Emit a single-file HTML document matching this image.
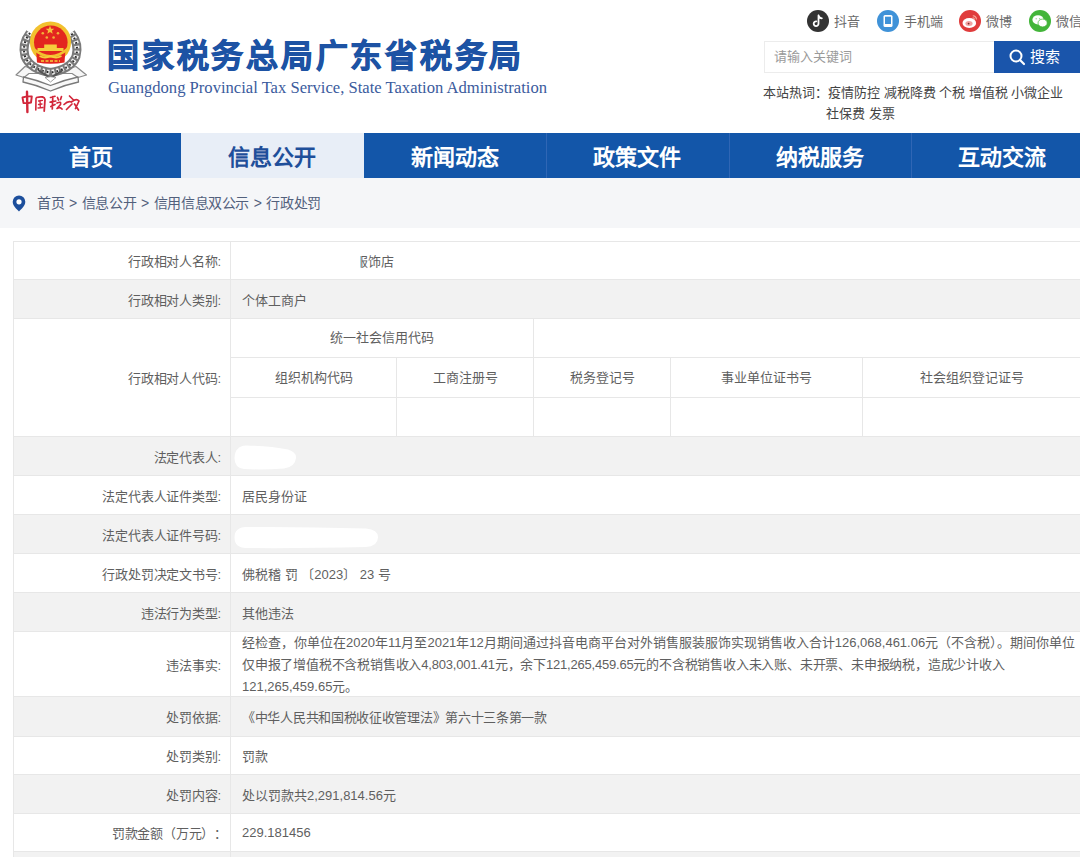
<!DOCTYPE html>
<html lang="zh-CN">
<head>
<meta charset="utf-8">
<style>
*{margin:0;padding:0;box-sizing:border-box}
html,body{width:1080px;height:857px;overflow:hidden;background:#fff}
body{font-family:"Liberation Sans",sans-serif;color:#333;position:relative}
.abs{position:absolute}
#header{position:absolute;left:0;top:0;width:1080px;height:133px;background:#fff}
#title{position:absolute;left:107px;top:32px;font-size:32px;font-weight:700;color:#1d53a4;letter-spacing:2.75px;white-space:nowrap;line-height:48px;-webkit-text-stroke:0.9px #1d53a4}
#sub{position:absolute;left:108px;top:78px;font-family:"Liberation Serif",serif;font-size:16.6px;color:#3b5b9d;white-space:nowrap;line-height:20px}
.soc{position:absolute;top:10px;height:22px;font-size:13px;color:#6a6a6a;line-height:22px;white-space:nowrap}
.soc svg{position:absolute;left:0;top:0}
.soc span{position:absolute;left:27px;top:1px}
#search{position:absolute;left:764px;top:41px;width:231px;height:32px;border:1px solid #ececec;border-right:none;background:#fff}
#search span{position:absolute;left:9px;top:0;line-height:30px;font-size:13px;color:#9a9a9a}
#sbtn{position:absolute;left:994px;top:41px;width:120px;height:32px;background:#1a55ab;color:#fff;font-size:15px;line-height:32px}
#sbtn svg{position:absolute;left:15px;top:8px}
#sbtn span{position:absolute;left:36px;top:0}
#hot{position:absolute;left:763px;top:83px;width:340px;font-size:13px;line-height:20.5px;color:#444;white-space:nowrap}
#hot .l{float:left}
#hot .w{margin-left:63px}
#nav{position:absolute;left:0;top:133px;width:1100px;height:45px;background:#1356a9}
#nav div{position:absolute;top:0;height:45px;width:182.67px;text-align:center;line-height:45px;padding-top:1.5px;font-size:22px;font-weight:700;color:#fff}
#nav div.on{background:#e8eef7;color:#1f4f9a}
#nav b{position:absolute;top:0;width:1px;height:45px;background:#2f66b5}
#crumb{position:absolute;left:0;top:178px;width:1080px;height:50px;background:#f5f6f8}
#crumb span{position:absolute;left:37px;top:14px;line-height:22px;font-size:14px;color:#52607c;white-space:nowrap;letter-spacing:-0.4px;word-spacing:1.4px}
#crumb svg{position:absolute;left:12px;top:17px}
#tbl{position:absolute;left:0;top:0;width:1080px;height:857px}
.row{position:absolute;left:13px;width:1100px;border-top:1px solid #e7e7e7}
.row.g{background:#f2f2f2}
.lab{position:absolute;left:0;top:0;width:218px;height:100%;text-align:right;padding-right:9px;font-size:13px;letter-spacing:-0.2px;color:#5f5f5f;border-left:1px solid #e7e7e7;border-right:1px solid #e7e7e7;display:flex;align-items:center;justify-content:flex-end;white-space:nowrap}
.val{position:absolute;left:229px;top:0;height:100%;font-size:13px;color:#5f5f5f;white-space:nowrap;display:flex;align-items:center}
.vl{position:absolute;left:217px;top:0;width:1px;height:100%;background:#e7e7e7}
.cell{position:absolute;font-size:13px;color:#5f5f5f;text-align:center;white-space:nowrap}
.blob{position:absolute;background:#fff;border-radius:50%}
</style>
</head>
<body>
<div id="header">
  <svg class="abs" style="left:0;top:0" width="100" height="125" viewBox="0 0 100 125">
    <!-- back ribbon -->
    <path d="M16 75 L25 66.5 L33 68.5 L68 68.5 L76 66.5 L86.5 75 L78 77.5 L72 73.5 L29 73.5 L24 77.5 Z" fill="#f6f6f6" stroke="#8a8a8a" stroke-width="1.2" stroke-linejoin="round"/>
    <!-- wreath -->
    <path d="M30 33 Q21.5 44 25 56.5 Q30.5 69.5 50.5 72.5 Q70.5 69.5 76 56.5 Q79.5 44 71 33" stroke="#7a7a7a" stroke-width="9" fill="none"/>
    <path d="M30 33 Q21.5 44 25 56.5 Q30.5 69.5 50.5 72.5 Q70.5 69.5 76 56.5 Q79.5 44 71 33" stroke="#f2f2f2" stroke-width="5" stroke-dasharray="2.6 2.2" fill="none"/>
    <path d="M30 33 Q21.5 44 25 56.5 Q30.5 69.5 50.5 72.5 Q70.5 69.5 76 56.5 Q79.5 44 71 33" stroke="#2a2a2a" stroke-width="2" stroke-dasharray="1.6 3.2" fill="none"/>
    <path d="M38 70 L50.5 78 L63 70" stroke="#555" stroke-width="2" fill="none"/>
    <!-- gold ring -->
    <circle cx="50.5" cy="42" r="20.6" fill="#f2c12e"/>
    <circle cx="50.8" cy="42.3" r="16.8" fill="#e3261f"/>
    <path d="M36 49 L37 62.5 Q50.5 65 64.5 62.5 L65.5 49 Z" fill="#e3261f"/>
    <!-- stars -->
    <polygon points="50,25.8 51.2,28.7 54.3,28.8 51.9,30.8 52.7,33.8 50,32.1 47.3,33.8 48.1,30.8 45.7,28.8 48.8,28.7" fill="#f6c13a"/>
    <circle cx="42.8" cy="33.2" r="1.3" fill="#f2b23a"/>
    <circle cx="58" cy="33.2" r="1.3" fill="#f2b23a"/>
    <circle cx="46.8" cy="37.5" r="1.3" fill="#f2b23a"/>
    <circle cx="53.6" cy="37.5" r="1.3" fill="#f2b23a"/>
    <!-- tiananmen -->
    <rect x="44.2" y="44.5" width="12.6" height="3.6" fill="#f5cf3c"/>
    <rect x="37.5" y="48" width="26" height="3" fill="#f5cf3c"/>
    <path d="M33.3 48.8 Q50.5 64 67.8 48.8" stroke="#f2c12e" stroke-width="2.6" fill="none"/>
    <path d="M39.5 56 q5.5 3.2 11 0 q5.5 3.2 11 0" stroke="#f5cf3c" stroke-width="1.8" fill="none"/>
    <path d="M41 61 h19" stroke="#f5cf3c" stroke-width="1.6" stroke-dasharray="3 1.5"/>
    <!-- front ribbon -->
    <path d="M23.5 77 Q37 80 50.5 85.5 Q64 80 78 77 L78.5 82 Q64 85 50.5 91 Q37 85 23 82 Z" fill="#f8f8f8" stroke="#7a7a7a" stroke-width="1.3" stroke-linejoin="round"/>
    <path d="M45 77.5 Q50.5 76 56 77.5 L50.5 82 Z" fill="#fff" stroke="#888" stroke-width="0.8"/>
    <!-- red text -->
    <g stroke="#d2263a" fill="none" stroke-linecap="round" stroke-linejoin="round">
      <path d="M22.5 97.5 Q27 96 31.8 96.5 L31 102.5 Q27 103.5 23.5 103 Z" stroke-width="1.9"/>
      <path d="M27 91.8 L27.4 112" stroke-width="2.4"/>
      <path d="M36 98.5 L35.8 110" stroke-width="1.6"/>
      <path d="M36.5 97.5 Q44.5 95.5 45 99.5 L44.2 111" stroke-width="1.8"/>
      <path d="M38.5 101 L42.5 100.3 M40 100.5 L40.3 107 M38.5 104.5 L42 104 M38 108 L43 107.5" stroke-width="1.3"/>
      <path d="M50.5 97.5 L55 96.3 M52.8 96.5 L52.3 109 M50.2 102.2 L55.8 101 M50.8 106.5 L55 104.5" stroke-width="1.7"/>
      <path d="M57.5 97.5 L58.5 100 M61.5 96.5 L60.5 99.5 M57 103 Q61.5 101 60.5 104.5 L57 108.5 Q60 106.5 62 109" stroke-width="1.7"/>
      <path d="M64 104.5 Q68 100.5 71.5 102 M69.5 96 L73.5 100 M72 101.5 Q76.5 98 79 101 L75.5 108.5 M66.5 109.5 L72 104 M74.5 104 L78.5 110" stroke-width="1.7"/>
    </g>
  </svg>
  <div id="title">国家税务总局广东省税务局</div>
  <div id="sub">Guangdong Provincial Tax Service, State Taxation Administration</div>

  <div class="soc" style="left:807px">
    <svg width="22" height="22" viewBox="0 0 22 22"><circle cx="11" cy="11" r="11" fill="#333"/><path d="M11.5 5.5 v8.2 a2.4 2.4 0 1 1 -2.2 -2.4 M11.5 5.5 q0.8 2.6 3.4 2.8" stroke="#fff" stroke-width="1.8" fill="none" stroke-linecap="round"/></svg>
    <span>抖音</span>
  </div>
  <div class="soc" style="left:877px">
    <svg width="22" height="22" viewBox="0 0 22 22"><circle cx="11" cy="11" r="11" fill="#3f92d8"/><rect x="6.5" y="5" width="9" height="12" rx="1.5" fill="#fff"/><rect x="8" y="6.7" width="6" height="7.3" fill="#3f92d8"/></svg>
    <span>手机端</span>
  </div>
  <div class="soc" style="left:959px">
    <svg width="22" height="22" viewBox="0 0 22 22"><circle cx="11" cy="11" r="11" fill="#e03c3c"/><ellipse cx="10.3" cy="13" rx="6.8" ry="4.9" fill="#fff"/><ellipse cx="10" cy="13.4" rx="3.6" ry="2.5" fill="#f2a3a3"/><circle cx="9.6" cy="13.6" r="0.9" fill="#7a2a2a"/><path d="M13.8 5.8 a3.8 3.8 0 0 1 3.6 3.8 M13.6 7.8 a1.8 1.8 0 0 1 1.8 1.8" stroke="#f7b0a0" stroke-width="1.1" fill="none"/></svg>
    <span>微博</span>
  </div>
  <div class="soc" style="left:1029px">
    <svg width="22" height="22" viewBox="0 0 22 22"><circle cx="11" cy="11" r="11" fill="#43b53a"/><ellipse cx="9" cy="9.8" rx="5.6" ry="4.6" fill="#fff"/><ellipse cx="13.6" cy="13" rx="4.6" ry="3.9" fill="#fff" stroke="#43b53a" stroke-width="0.7"/><circle cx="7.2" cy="8.8" r="0.7" fill="#9ccf96"/><circle cx="10.6" cy="8.8" r="0.7" fill="#9ccf96"/></svg>
    <span>微信</span>
  </div>

  <div id="search"><span>请输入关键词</span></div>
  <div id="sbtn"><svg width="17" height="17" viewBox="0 0 17 17"><circle cx="7" cy="7" r="5.5" stroke="#fff" stroke-width="2" fill="none"/><path d="M11 11 l4 4" stroke="#fff" stroke-width="2.2" stroke-linecap="round"/></svg><span>搜索</span></div>
  <div id="hot"><span class="l">本站热词：</span><div class="w">疫情防控 减税降费 个税 增值税 小微企业<br>社保费 发票</div></div>
</div>

<div id="nav">
  <div style="left:0">首页</div>
  <div class="on" style="left:181px">信息公开</div>
  <div style="left:363.5px">新闻动态</div>
  <div style="left:546px">政策文件</div>
  <div style="left:728.5px">纳税服务</div>
  <div style="left:911px">互动交流</div>
  <b style="left:546px"></b><b style="left:728.5px"></b><b style="left:911px"></b>
</div>

<div id="crumb">
  <svg width="14" height="17" viewBox="0 0 14 17"><path d="M7 0.5 a6.3 6.3 0 0 1 6.3 6.3 c0 4 -4 7.5 -6.3 9.7 c-2.3 -2.2 -6.3 -5.7 -6.3 -9.7 a6.3 6.3 0 0 1 6.3 -6.3 z" fill="#1d4f9c"/><circle cx="7" cy="6.8" r="2.6" fill="#fff"/></svg>
  <span>首页 &gt; 信息公开 &gt; 信用信息双公示 &gt; 行政处罚</span>
</div>

<div id="tbl">
  <div class="row" style="top:241px;height:38px"><div class="lab">行政相对人名称:</div><div class="val" style="left:342px">服饰店</div><div class="abs" style="left:339px;top:8px;width:8px;height:22px;background:#fff"></div></div>
  <div class="row g" style="top:279px;height:39px"><div class="lab">行政相对人类别:</div><div class="val">个体工商户</div></div>
  <div class="row" style="top:318px;height:118px"><div class="lab">行政相对人代码:</div>
    <div class="abs" style="left:217px;top:38px;width:900px;height:1px;background:#e7e7e7"></div>
    <div class="abs" style="left:217px;top:78px;width:900px;height:1px;background:#e7e7e7"></div>
    <div class="abs" style="left:520px;top:0;width:1px;height:38px;background:#e7e7e7"></div>
    <div class="abs" style="left:383px;top:38px;width:1px;height:80px;background:#e7e7e7"></div>
    <div class="abs" style="left:520px;top:38px;width:1px;height:80px;background:#e7e7e7"></div>
    <div class="abs" style="left:657px;top:38px;width:1px;height:80px;background:#e7e7e7"></div>
    <div class="abs" style="left:849px;top:38px;width:1px;height:80px;background:#e7e7e7"></div>
    <div class="cell" style="left:218px;top:0;width:302px;line-height:38px">统一社会信用代码</div>
    <div class="cell" style="left:218px;top:39px;width:165px;line-height:39px">组织机构代码</div>
    <div class="cell" style="left:384px;top:39px;width:136px;line-height:39px">工商注册号</div>
    <div class="cell" style="left:521px;top:39px;width:136px;line-height:39px">税务登记号</div>
    <div class="cell" style="left:658px;top:39px;width:191px;line-height:39px">事业单位证书号</div>
    <div class="cell" style="left:850px;top:39px;width:217px;line-height:39px">社会组织登记证号</div>
  </div>
  <div class="row g" style="top:436px;height:39px"><div class="lab">法定代表人:</div></div>
  <div class="row" style="top:475px;height:39px"><div class="lab">法定代表人证件类型:</div><div class="val">居民身份证</div></div>
  <div class="row g" style="top:514px;height:39px"><div class="lab">法定代表人证件号码:</div></div>
  <div class="row" style="top:553px;height:39px"><div class="lab">行政处罚决定文书号:</div><div class="val">佛税稽 罚 〔2023〕 23 号</div></div>
  <div class="row g" style="top:592px;height:39px"><div class="lab">违法行为类型:</div><div class="val">其他违法</div></div>
  <div class="row" style="top:631px;height:65px"><div class="lab">违法事实:</div><div class="val" style="line-height:22px;top:1px"><div>经检查，你单位在2020年11月至2021年12月期间通过抖音电商平台对外销售服装服饰实现销售收入合计126,068,461.06元（不含税）。期间你单位<br><span style="letter-spacing:-0.2px">仅申报了增值税不含税销售收入4,803,001.41元，余下121,265,459.65元的不含税销售收入未入账、未开票、未申报纳税，造成少计收入</span><br>121,265,459.65元。</div></div></div>
  <div class="row g" style="top:696px;height:40px"><div class="lab">处罚依据:</div><div class="val" style="letter-spacing:-0.3px">《中华人民共和国税收征收管理法》第六十三条第一款</div></div>
  <div class="row" style="top:736px;height:38px"><div class="lab">处罚类别:</div><div class="val">罚款</div></div>
  <div class="row g" style="top:774px;height:39px"><div class="lab">处罚内容:</div><div class="val">处以罚款共2,291,814.56元</div></div>
  <div class="row" style="top:813px;height:38px"><div class="lab" style="text-spacing-trim:space-all;padding-right:3px">罚款金额（万元）：</div><div class="val">229.181456</div></div>
  <div class="row g" style="top:851px;height:39px"><div class="lab"></div></div>
</div>
<svg class="abs" style="left:0;top:0" width="1080" height="857" viewBox="0 0 1080 857">
  <path d="M246 445.5 Q270 446 288 449.5 Q296.5 452 296 458 Q295 467 284 468.5 Q262 470 244 469 Q234.5 468 234.5 458 Q235 446 246 445.5 Z" fill="#fff"/>
  <path d="M246 527 Q300 526.5 366 528.5 Q378.5 530 378 537.5 Q377.5 546.5 366 547 Q300 548.5 246 548 Q234.5 547.5 234.5 537.5 Q234.5 527.5 246 527 Z" fill="#fff"/>
</svg>
</body>
</html>
